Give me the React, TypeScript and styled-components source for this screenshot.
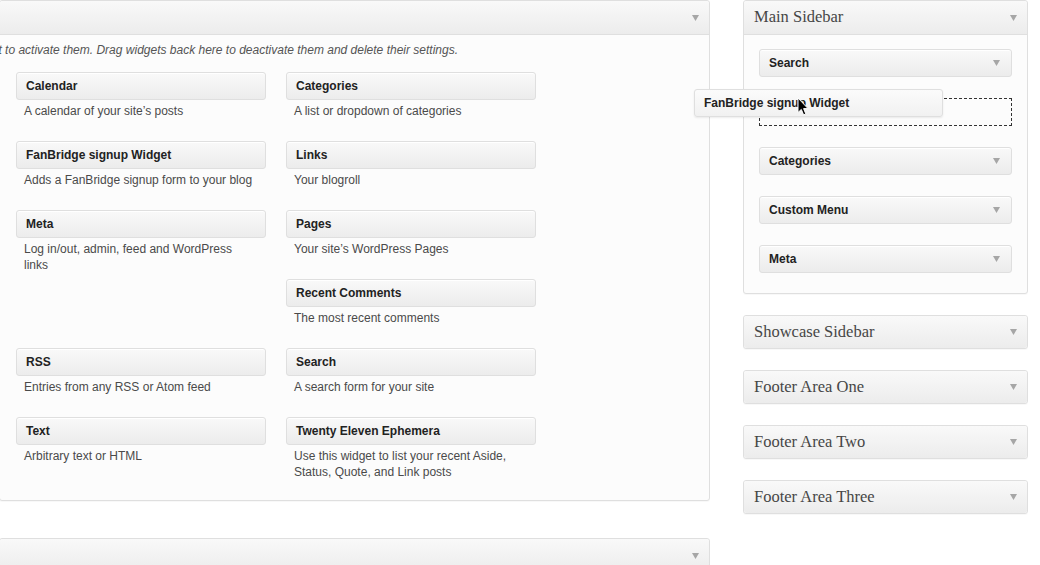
import React from "react";
import styled, { createGlobalStyle } from "styled-components";

const Global = createGlobalStyle`
  html, body { margin: 0; padding: 0; background: #ffffff; }
  body { font-family: "Liberation Sans", Arial, Helvetica, sans-serif; overflow: hidden; }
  * { box-sizing: border-box; }
`;

const Page = styled.div`
  position: relative;
  width: 1040px;
  height: 565px;
  overflow: hidden;
  display: flex;
  align-items: flex-start;
`;

const LeftColumn = styled.div`
  width: 711px;
  margin-left: -1px;
  display: flex;
  flex-direction: column;
  gap: 37px;
`;

const RightColumn = styled.div`
  width: 285px;
  margin-left: 33px;
  display: flex;
  flex-direction: column;
  gap: 21px;
`;

const Panel = styled.div`
  border: 1px solid #dfdfdf;
  border-radius: 3px;
  background: #fcfcfc;
  box-shadow: 0 1px 1px rgba(0, 0, 0, 0.03);
`;

const PanelHeader = styled.div<{ $closed?: boolean }>`
  height: ${(p) => (p.$closed ? "32px" : "34px")};
  display: flex;
  align-items: center;
  justify-content: space-between;
  padding: 0 10px 0 10px;
  background: linear-gradient(to bottom, #f9f9f9, #ececec);
  border-bottom: ${(p) => (p.$closed ? "none" : "1px solid #dfdfdf")};
  border-radius: ${(p) => (p.$closed ? "3px" : "3px 3px 0 0")};
`;

const SidebarTitle = styled.span`
  font-family: "Liberation Serif", "Times New Roman", serif;
  font-size: 16.5px;
  color: #464646;
  margin-top: -1px;
`;

const Arrow = styled.svg`
  width: 7px;
  height: 6px;
  flex: none;
`;

const DownArrow = () => (
  <Arrow viewBox="0 0 7 6">
    <polygon points="0,0 7,0 3.5,6" fill="#a6a6a6" />
  </Arrow>
);

const Intro = styled.div`
  width: 458px;
  display: flex;
  justify-content: flex-end;
  padding-top: 7px;
  height: 37px;
  font-style: italic;
  font-size: 12px;
  line-height: 16px;
  color: #555;
`;

const IntroText = styled.span`
  white-space: nowrap;
`;

const WidgetGrid = styled.div`
  display: grid;
  grid-template-columns: 250px 250px;
  grid-auto-rows: 69px;
  column-gap: 20px;
  padding: 0 0 14px 16px;
`;

const WidgetItem = styled.div<{ $tall?: boolean }>`
  grid-row: ${(p) => (p.$tall ? "span 2" : "auto")};
`;

const Card = styled.div`
  height: 28px;
  width: 100%;
  border: 1px solid #dfdfdf;
  border-radius: 3px;
  background: linear-gradient(to bottom, #f9f9f9, #ececec);
  display: flex;
  align-items: center;
  justify-content: space-between;
  padding: 0 11px 0 9px;
  box-shadow: inset 0 1px 0 #fff;
`;

const CardTitle = styled.span`
  font-weight: bold;
  font-size: 12px;
  color: #222;
`;

const Desc = styled.div`
  width: 242px;
  margin-top: 3px;
  padding-left: 8px;
  font-size: 12px;
  line-height: 16px;
  color: #4a4a4a;
`;

const SidebarBody = styled.div`
  padding: 14px 15px 20px;
  display: flex;
  flex-direction: column;
  gap: 21px;
`;

const Placeholder = styled.div`
  height: 28px;
  border: 1px dashed #333;
`;

const DragHelper = styled.div`
  position: absolute;
  left: 694px;
  top: 89px;
  width: 249px;
  height: 28px;
  border: 1px solid #dfdfdf;
  border-radius: 3px;
  background: linear-gradient(to bottom, #fbfbfb, #f1f1f1);
  box-shadow: 0 1px 2px rgba(0, 0, 0, 0.08);
  display: flex;
  align-items: center;
  padding: 0 9px;
`;

const Cursor = styled.svg`
  position: absolute;
  left: 797px;
  top: 97px;
  width: 12px;
  height: 19px;
`;

const widgets: { title: string; desc: string; tall?: boolean }[] = [
  { title: "Calendar", desc: "A calendar of your site’s posts" },
  { title: "Categories", desc: "A list or dropdown of categories" },
  { title: "FanBridge signup Widget", desc: "Adds a FanBridge signup form to your blog" },
  { title: "Links", desc: "Your blogroll" },
  { title: "Meta", desc: "Log in/out, admin, feed and WordPress links", tall: true },
  { title: "Pages", desc: "Your site’s WordPress Pages" },
  { title: "Recent Comments", desc: "The most recent comments" },
  { title: "RSS", desc: "Entries from any RSS or Atom feed" },
  { title: "Search", desc: "A search form for your site" },
  { title: "Text", desc: "Arbitrary text or HTML" },
  {
    title: "Twenty Eleven Ephemera",
    desc: "Use this widget to list your recent Aside, Status, Quote, and Link posts",
  },
];

const closedSidebars = ["Showcase Sidebar", "Footer Area One", "Footer Area Two", "Footer Area Three"];

export default function App() {
  return (
    <>
      <Global />
      <Page>
        <LeftColumn>
          <Panel>
            <PanelHeader>
              <span />
              <DownArrow />
            </PanelHeader>
            <Intro>
              <IntroText>
                Drag widgets from here to a sidebar on the right to activate them. Drag widgets back here to
                deactivate them and delete their settings.
              </IntroText>
            </Intro>
            <WidgetGrid>
              {widgets.map((w) => (
                <WidgetItem key={w.title} $tall={w.tall}>
                  <Card>
                    <CardTitle>{w.title}</CardTitle>
                  </Card>
                  <Desc>{w.desc}</Desc>
                </WidgetItem>
              ))}
            </WidgetGrid>
          </Panel>
          <Panel>
            <PanelHeader>
              <span />
              <DownArrow />
            </PanelHeader>
          </Panel>
        </LeftColumn>
        <RightColumn>
          <Panel>
            <PanelHeader>
              <SidebarTitle>Main Sidebar</SidebarTitle>
              <DownArrow />
            </PanelHeader>
            <SidebarBody>
              <Card>
                <CardTitle>Search</CardTitle>
                <DownArrow />
              </Card>
              <Placeholder />
              {["Categories", "Custom Menu", "Meta"].map((t) => (
                <Card key={t}>
                  <CardTitle>{t}</CardTitle>
                  <DownArrow />
                </Card>
              ))}
            </SidebarBody>
          </Panel>
          {closedSidebars.map((s) => (
            <Panel key={s}>
              <PanelHeader $closed>
                <SidebarTitle>{s}</SidebarTitle>
                <DownArrow />
              </PanelHeader>
            </Panel>
          ))}
        </RightColumn>
        <DragHelper>
          <CardTitle>FanBridge signup Widget</CardTitle>
        </DragHelper>
        <Cursor viewBox="0 0 12 19">
          <path
            d="M1 1 L1 15.5 L4.3 12.4 L6.6 17.8 L8.8 16.9 L6.6 11.6 L11 11.6 Z"
            fill="#000"
            stroke="#fff"
            strokeWidth="1"
            strokeLinejoin="round"
          />
        </Cursor>
      </Page>
    </>
  );
}
